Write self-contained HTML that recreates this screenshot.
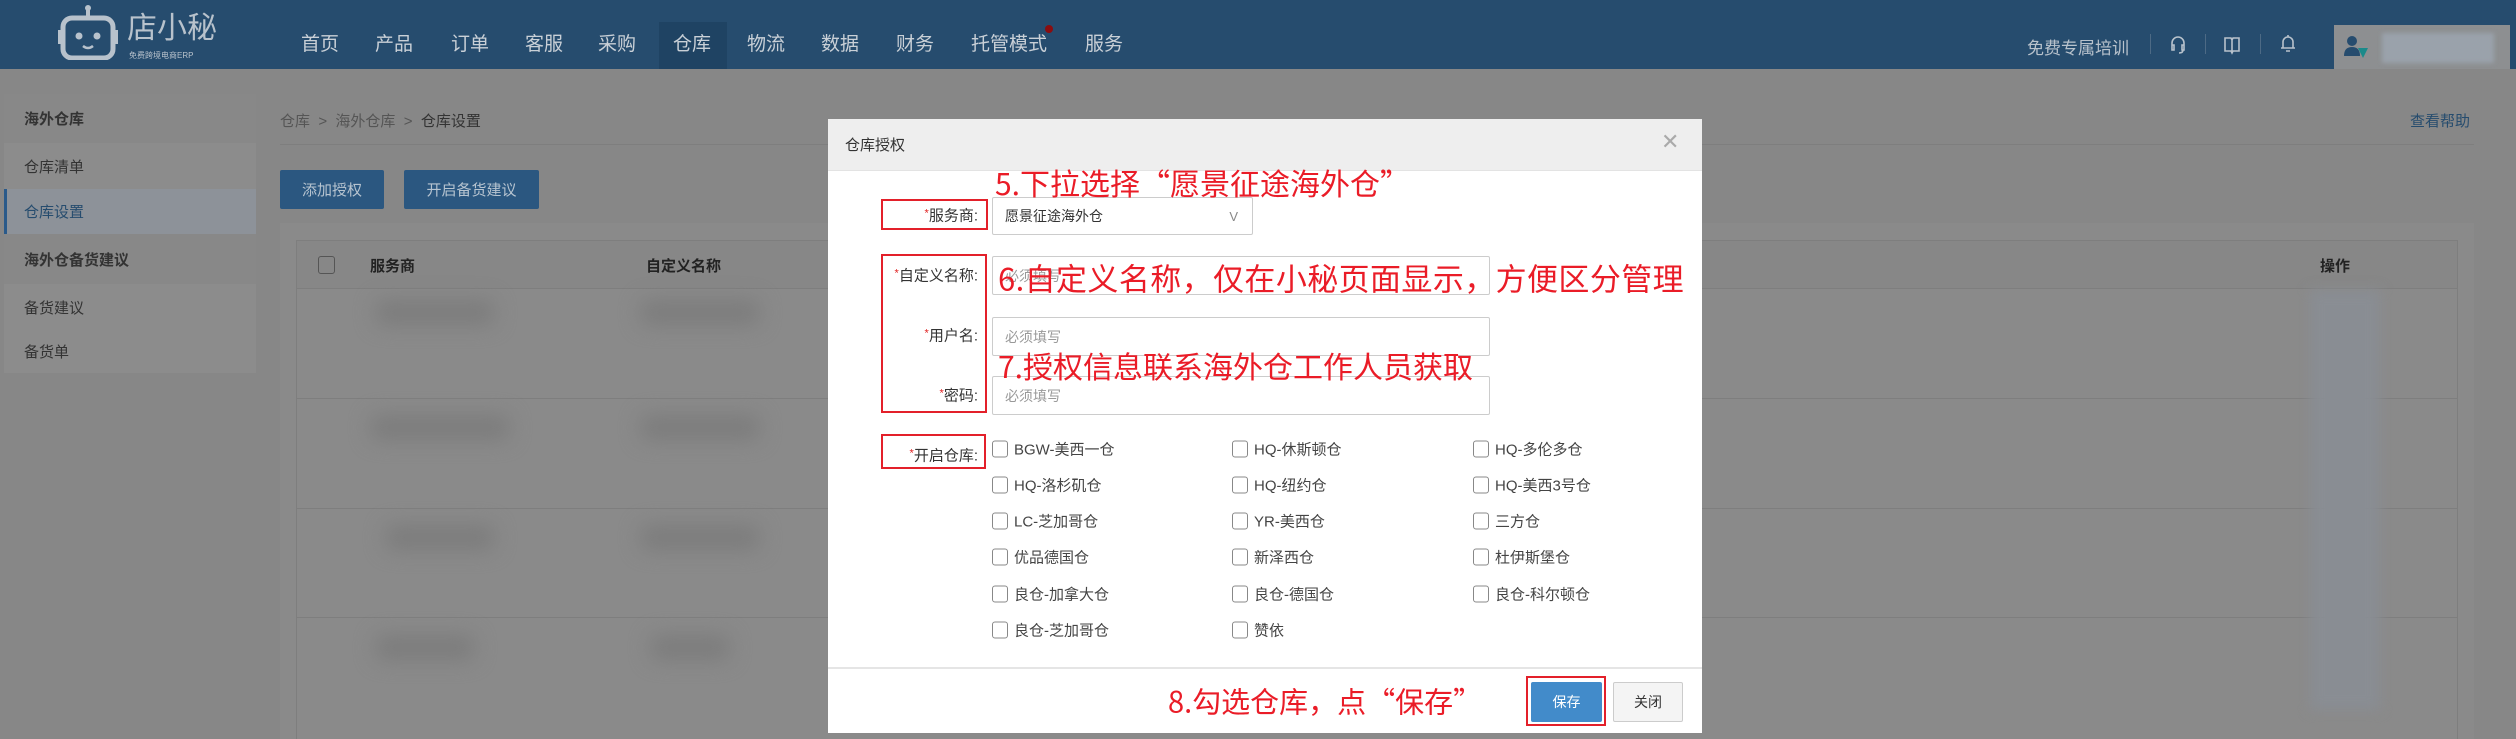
<!DOCTYPE html>
<html><head><meta charset="utf-8"><style>
*{margin:0;padding:0;box-sizing:border-box}
body{width:2516px;height:739px;overflow:hidden;background:#878787;font-family:"Liberation Sans","Noto Sans CJK SC",sans-serif;position:relative;color:#222}
.a{position:absolute;white-space:nowrap}
.hdr{left:0;top:0;width:2516px;height:69px;background:#264c6e}
.nav{top:33px;font-size:19px;color:#c9d0d7;transform:translateX(-50%);line-height:24px}
.side{left:4px;top:94px;width:252px;height:279px;background:#8c8c8c}
.si{left:4px;width:252px;font-size:15px;color:#333;padding-left:20px;display:flex;align-items:center}
.btn{background:#2b5780;color:#b7c4d0;font-size:15px;display:flex;align-items:center;justify-content:center;border-radius:2px}
.blur{background:#7c7c7c;filter:blur(10px);border-radius:10px}
.modal{left:828px;top:119px;width:874px;height:614px;background:#fff}
.lbl{font-size:15px;color:#333;text-align:right;width:90px;transform:translateY(-50%)}
.lbl i{color:#e02020;font-style:normal;font-size:11px;vertical-align:4px}
.rb{border:2px solid #e3202a}
.inp{border:1px solid #ccc;border-radius:2px;height:39px;font-size:14px;color:#999;padding-left:12px;display:flex;align-items:center}
.ann{color:#ea1c27;font-family:"Noto Sans CJK SC",sans-serif;transform:translateY(-50%);line-height:1}
.cb{font-size:15px;color:#444;display:flex;align-items:center;transform:translateY(-50%)}
.cb b{display:inline-block;width:16px;height:17px;border:1px solid #888;border-radius:3px;margin-right:6px}
</style></head><body>
<div class="a hdr"></div>
<svg class="a" style="left:58px;top:4px" width="60" height="56" viewBox="0 0 60 56"><line x1="30" y1="2" x2="30" y2="12" stroke="#b8c2cc" stroke-width="4"/><circle cx="30" cy="4" r="3" fill="#b8c2cc"/><rect x="5" y="14" width="50" height="40" rx="9" fill="none" stroke="#b8c2cc" stroke-width="5"/><rect x="0" y="26" width="5" height="14" fill="#b8c2cc"/><rect x="55" y="26" width="5" height="14" fill="#b8c2cc"/><circle cx="21" cy="32" r="3.5" fill="#b8c2cc"/><circle cx="39" cy="32" r="3.5" fill="#b8c2cc"/><path d="M25 42 Q30 46 35 42" stroke="#b8c2cc" stroke-width="2.5" fill="none"/></svg>
<div class="a" style="left:127px;top:12px;font-size:30px;color:#b8c2cc;line-height:34px">店小秘</div>
<div class="a" style="left:129px;top:50px;font-size:8px;color:#b8c2cc">免费跨境电商ERP</div>
<div class="a" style="left:659px;top:22px;width:68px;height:47px;background:#1f4363"></div>
<div class="a nav" style="left:320px">首页</div><div class="a nav" style="left:394px">产品</div><div class="a nav" style="left:470px">订单</div><div class="a nav" style="left:544px">客服</div><div class="a nav" style="left:617px">采购</div><div class="a nav" style="left:692px">仓库</div><div class="a nav" style="left:766px">物流</div><div class="a nav" style="left:840px">数据</div><div class="a nav" style="left:915px">财务</div><div class="a nav" style="left:1009px">托管模式</div><div class="a nav" style="left:1104px">服务</div>
<div class="a" style="left:1045px;top:25px;width:8px;height:8px;border-radius:50%;background:#8a0d10"></div>
<div class="a" style="left:2027px;top:34px;font-size:17px;color:#b8c2cc">免费专属培训</div>
<div class="a" style="left:2150px;top:34px;width:1px;height:20px;background:#4d6a85"></div>
<div class="a" style="left:2205px;top:34px;width:1px;height:20px;background:#4d6a85"></div>
<div class="a" style="left:2260px;top:34px;width:1px;height:20px;background:#4d6a85"></div>
<svg class="a" style="left:2169px;top:35px" width="18" height="20"><path d="M3 11 V8 a6 6 0 0 1 12 0 V11 M3 10 h2 v5 h-2z M13 10 h2 v5 h-2z M14 15 q0 3 -4 3" stroke="#b8c2cc" stroke-width="1.6" fill="none"/></svg>
<svg class="a" style="left:2223px;top:35px" width="18" height="20"><path d="M2 3 h6 l1 2 l1 -2 h6 v13 h-6 l-1 2 l-1 -2 h-6z M9 5 v12" stroke="#b8c2cc" stroke-width="1.6" fill="none"/></svg>
<svg class="a" style="left:2279px;top:33px" width="18" height="22"><path d="M4 15 V9 a5 5 0 0 1 10 0 V15 h2 H2z M9 2 v2 M7 18 h4" stroke="#b8c2cc" stroke-width="1.6" fill="none"/></svg>
<div class="a" style="left:2334px;top:25px;width:176px;height:44px;background:#8d8f91"></div>
<svg class="a" style="left:2344px;top:34px" width="26" height="28"><circle cx="8" cy="7" r="5" fill="#264c6e"/><path d="M0 22 q0-9 8-9 q8 0 8 9z" fill="#264c6e"/><path d="M14 14 h10 l-5 10z" fill="#1b8a8a"/></svg>
<div class="a" style="left:2382px;top:33px;width:112px;height:30px;background:#9aa2ab;filter:blur(2px)"></div>

<div class="a side"></div>
<div class="a si" style="top:94px;height:49px;background:#888;font-weight:bold">海外仓库</div>
<div class="a si" style="top:143px;height:46px">仓库清单</div>
<div class="a si" style="top:189px;height:45px;background:#8d9299;color:#264c6e;border-left:3px solid #2a5a8a;padding-left:17px">仓库设置</div>
<div class="a si" style="top:234px;height:50px;background:#888;font-weight:bold">海外仓备货建议</div>
<div class="a si" style="top:284px;height:46px">备货建议</div>
<div class="a si" style="top:330px;height:43px">备货单</div>

<div class="a" style="left:280px;top:110px;font-size:15px;color:#555">仓库 &nbsp;&gt;&nbsp; 海外仓库 &nbsp;&gt;&nbsp; <span style="color:#333">仓库设置</span></div>
<div class="a" style="left:2410px;top:110px;font-size:15px;color:#264c6e">查看帮助</div>
<div class="a" style="left:280px;top:144px;width:2194px;height:1px;background:#7e7e7e"></div>
<div class="a btn" style="left:280px;top:170px;width:104px;height:39px">添加授权</div>
<div class="a btn" style="left:404px;top:170px;width:135px;height:39px">开启备货建议</div>

<div class="a" style="left:280px;top:223px;width:2194px;height:516px;background:#8a8a8a"></div>
<div class="a" style="left:296px;top:240px;width:2162px;height:499px;border:1px solid #7e7e7e;border-bottom:none"></div>
<div class="a" style="left:297px;top:241px;width:2160px;height:48px;background:#878787;border-bottom:1px solid #7e7e7e"></div>
<div class="a" style="left:318px;top:256px;width:17px;height:18px;border:1px solid #555;border-radius:3px"></div>
<div class="a" style="left:370px;top:255px;font-size:15px;font-weight:bold;color:#222">服务商</div>
<div class="a" style="left:646px;top:255px;font-size:15px;font-weight:bold;color:#222">自定义名称</div>
<div class="a" style="left:2320px;top:255px;font-size:15px;font-weight:bold;color:#222">操作</div>
<div class="a" style="left:297px;top:398px;width:2160px;height:1px;background:#7e7e7e"></div>
<div class="a" style="left:297px;top:508px;width:2160px;height:1px;background:#7e7e7e"></div>
<div class="a" style="left:297px;top:617px;width:2160px;height:1px;background:#7e7e7e"></div>
<div class="a blur" style="left:375px;top:300px;width:120px;height:25px"></div>
<div class="a blur" style="left:640px;top:300px;width:120px;height:25px"></div>
<div class="a blur" style="left:370px;top:415px;width:140px;height:25px"></div>
<div class="a blur" style="left:640px;top:415px;width:120px;height:25px"></div>
<div class="a blur" style="left:385px;top:525px;width:110px;height:25px"></div>
<div class="a blur" style="left:640px;top:525px;width:120px;height:25px"></div>
<div class="a blur" style="left:375px;top:635px;width:100px;height:25px"></div>
<div class="a blur" style="left:650px;top:635px;width:80px;height:25px"></div>
<div class="a" style="left:2310px;top:290px;width:70px;height:420px;background:#898d93;filter:blur(6px)"></div>

<div class="a modal"></div>
<div class="a" style="left:828px;top:119px;width:874px;height:52px;background:#eee;border-bottom:1px solid #e3e3e3"></div>
<div class="a" style="left:845px;top:134px;font-size:15px;color:#333">仓库授权</div>
<div class="a" style="left:1661px;top:129px;font-size:22px;color:#aaa;font-weight:300">✕</div>

<div class="a rb" style="left:881px;top:199px;width:107px;height:31px"></div>
<div class="a rb" style="left:881px;top:254px;width:106px;height:159px"></div>
<div class="a rb" style="left:881px;top:434px;width:105px;height:35px"></div>
<div class="a rb" style="left:1526px;top:676px;width:80px;height:50px"></div>

<div class="a lbl" style="left:888px;top:215px"><i>*</i>服务商:</div>
<div class="a lbl" style="left:888px;top:275px"><i>*</i>自定义名称:</div>
<div class="a lbl" style="left:888px;top:335px"><i>*</i>用户名:</div>
<div class="a lbl" style="left:888px;top:395px"><i>*</i>密码:</div>
<div class="a lbl" style="left:888px;top:455px"><i>*</i>开启仓库:</div>

<div class="a inp" style="left:992px;top:197px;width:261px;height:38px;color:#333">愿景征途海外仓<span style="position:absolute;right:14px;color:#888;font-size:13px">V</span></div>
<div class="a inp" style="left:992px;top:256px;width:498px">必须填写</div>
<div class="a inp" style="left:992px;top:317px;width:498px">必须填写</div>
<div class="a inp" style="left:992px;top:376px;width:498px">必须填写</div>

<div class="a cb" style="left:992px;top:449px"><b></b>BGW-美西一仓</div>
<div class="a cb" style="left:1232px;top:449px"><b></b>HQ-休斯顿仓</div>
<div class="a cb" style="left:1473px;top:449px"><b></b>HQ-多伦多仓</div>
<div class="a cb" style="left:992px;top:485px"><b></b>HQ-洛杉矶仓</div>
<div class="a cb" style="left:1232px;top:485px"><b></b>HQ-纽约仓</div>
<div class="a cb" style="left:1473px;top:485px"><b></b>HQ-美西3号仓</div>
<div class="a cb" style="left:992px;top:521px"><b></b>LC-芝加哥仓</div>
<div class="a cb" style="left:1232px;top:521px"><b></b>YR-美西仓</div>
<div class="a cb" style="left:1473px;top:521px"><b></b>三方仓</div>
<div class="a cb" style="left:992px;top:557px"><b></b>优品德国仓</div>
<div class="a cb" style="left:1232px;top:557px"><b></b>新泽西仓</div>
<div class="a cb" style="left:1473px;top:557px"><b></b>杜伊斯堡仓</div>
<div class="a cb" style="left:992px;top:594px"><b></b>良仓-加拿大仓</div>
<div class="a cb" style="left:1232px;top:594px"><b></b>良仓-德国仓</div>
<div class="a cb" style="left:1473px;top:594px"><b></b>良仓-科尔顿仓</div>
<div class="a cb" style="left:992px;top:630px"><b></b>良仓-芝加哥仓</div>
<div class="a cb" style="left:1232px;top:630px"><b></b>赞依</div>

<div class="a" style="left:828px;top:667px;width:874px;height:2px;background:#e5e5e5"></div>
<div class="a" style="left:1531px;top:682px;width:71px;height:40px;background:#428bca;color:#fff;font-size:14px;display:flex;align-items:center;justify-content:center;border-radius:2px">保存</div>
<div class="a" style="left:1613px;top:682px;width:70px;height:40px;background:#f4f4f4;border:1px solid #ccc;color:#333;font-size:14px;display:flex;align-items:center;justify-content:center;border-radius:2px">关闭</div>

<div class="a ann" style="left:995px;top:182px;font-size:30px">5.下拉选择“愿景征途海外仓”</div>
<div class="a ann" style="left:998px;top:277px;font-size:31px;letter-spacing:0.4px">6.自定义名称，仅在小秘页面显示，方便区分管理</div>
<div class="a ann" style="left:998px;top:365px;font-size:30px">7.授权信息联系海外仓工作人员获取</div>
<div class="a ann" style="left:1168px;top:701px;font-size:29px">8.勾选仓库，点“保存”</div>
</body></html>
